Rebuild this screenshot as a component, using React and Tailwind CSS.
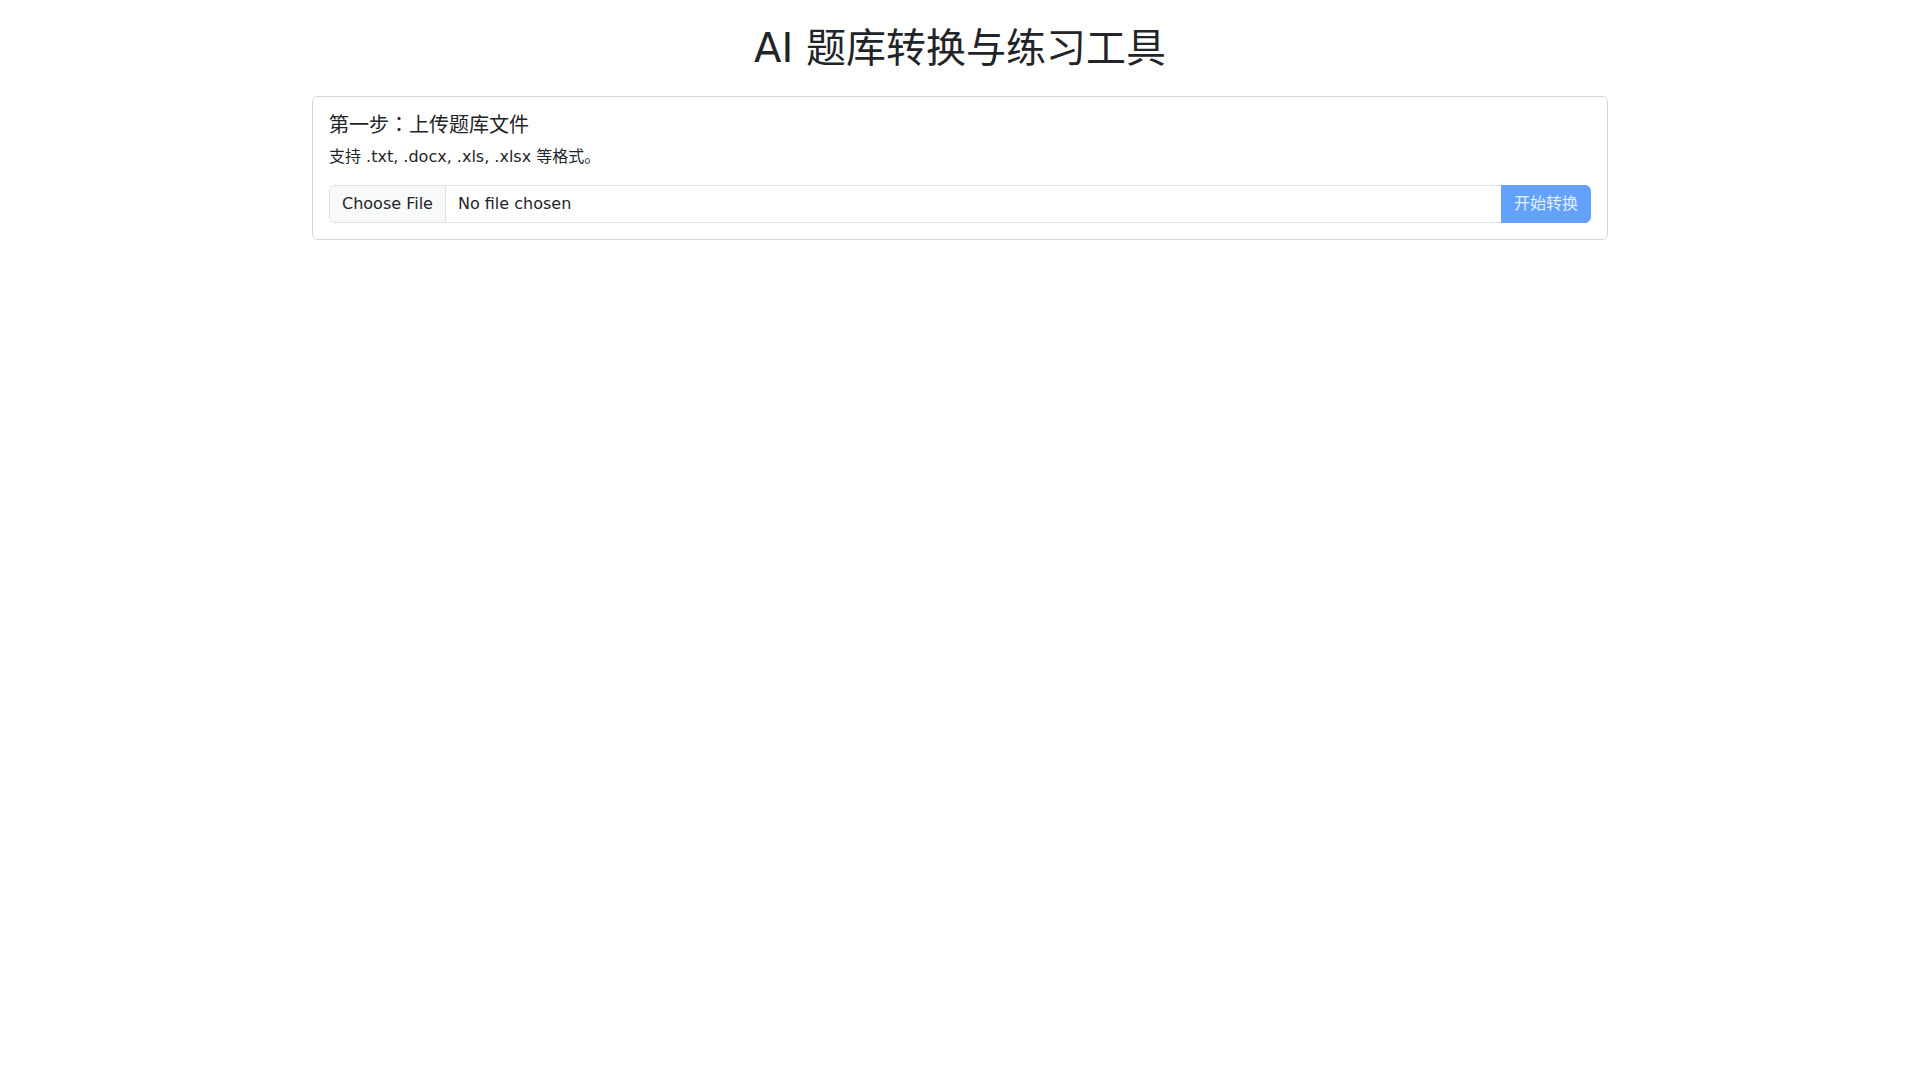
export default function App() {
    return (
        <div className="min-h-screen bg-white text-[#212529] font-['DejaVu_Sans','Noto_Sans_CJK_JP',sans-serif]">
            <div className="w-[1320px] mx-auto px-3 pt-6">
                <h1 className="text-center text-[40px] leading-[1.2] font-normal mb-6">AI 题库转换与练习工具</h1>
                <div className="border border-[#d3d4d5] rounded-[6px]">
                    <div className="p-4">
                        <h5 className="text-[20px] leading-[1.2] font-normal mb-2">第一步：上传题库文件</h5>
                        <p className="text-base leading-6 mb-4">支持 .txt, .docx, .xls, .xlsx 等格式。</p>
                        <div className="flex h-[38px]">
                            <div className="flex-1 flex items-stretch border border-[#dee2e6] rounded-l-[6px] overflow-hidden text-base leading-6">
                                <span className="flex items-center px-3 bg-[#f8f9fa] border-r border-[#dee2e6]">Choose File</span>
                                <span className="flex items-center pl-3">No file chosen</span>
                            </div>
                            <button className="px-3 bg-[#62a1fe] border border-[#62a1fe] text-[#ffffffd9] text-base leading-6 rounded-r-[6px] -ml-px" disabled>开始转换</button>
                        </div>
                    </div>
                </div>
            </div>
        </div>
    );
}
